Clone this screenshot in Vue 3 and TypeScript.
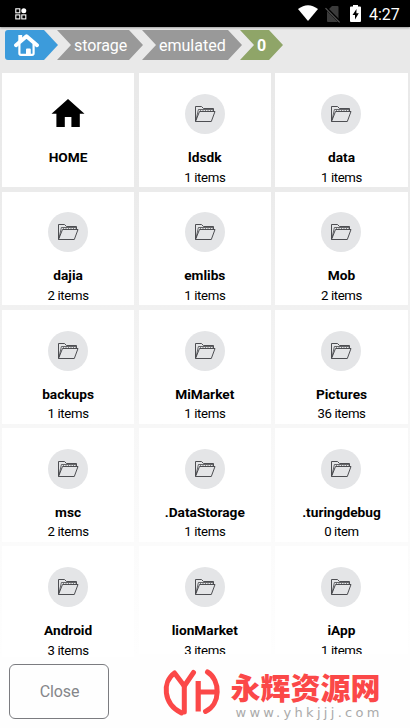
<script setup lang="ts">
interface Entry {
  name: string
  count: string
}

const entries: Entry[] = [
  { name: 'HOME', count: '' },
  { name: 'ldsdk', count: '1 items' },
  { name: 'data', count: '1 items' },
  { name: 'dajia', count: '2 items' },
  { name: 'emlibs', count: '1 items' },
  { name: 'Mob', count: '2 items' },
  { name: 'backups', count: '1 items' },
  { name: 'MiMarket', count: '1 items' },
  { name: 'Pictures', count: '36 items' },
  { name: 'msc', count: '2 items' },
  { name: '.DataStorage', count: '1 items' },
  { name: '.turingdebug', count: '0 item' },
  { name: 'Android', count: '3 items' },
  { name: 'lionMarket', count: '3 items' },
  { name: 'iApp', count: '1 items' },
]
</script>

<template>
  <div class="screen">
    <header class="status">
      <svg class="apps" width="12" height="12" viewBox="0 0 12 12" fill="none" stroke="#fff" stroke-width="1.1">
        <rect x=".8" y=".8" width="4" height="4" />
        <rect x=".8" y="6.9" width="4" height="4" />
        <rect x="6.8" y="6.9" width="4" height="4" />
        <circle cx="8.8" cy="2.7" r="2.5" fill="#fff" stroke="none" />
      </svg>
      <div class="indicators">
        <svg width="20" height="16" viewBox="0 0 20 16"><path d="M0 4Q10-3.6 20 4L10 16Z" fill="#fff" /></svg>
        <svg class="sim" width="16" height="17" viewBox="0 0 16 17">
          <path d="M7 0H12.5Q13.5 0 13.5 1V16H3Q2 16 2 15V5Z" fill="#3b3b3b" />
          <path d="M.5 1.5L15 16" stroke="#000" stroke-width="3" />
          <path d="M.5 2.2L14.6 16.3" stroke="#555" stroke-width="1.2" />
        </svg>
        <svg class="battery" width="11" height="17" viewBox="0 0 11 17">
          <path d="M3 0H8V1.5H10Q11 1.5 11 2.5V16Q11 17 10 17H1Q0 17 0 16V2.5Q0 1.5 1 1.5H3Z" fill="#fff" />
          <path d="M6.5 4L2.5 10H5V14.5L8.8 8.3H6.4Z" fill="#000" />
        </svg>
        <time>4:27</time>
      </div>
    </header>

    <nav class="crumbs">
      <a class="crumb root">
        <svg width="25" height="24" viewBox="0 0 25 24">
          <path d="M5.4 11V20.2Q5.4 21.8 7 21.8H18Q19.6 21.8 19.6 20.2V11" fill="none" stroke="#fff" stroke-width="2.2" />
          <path d="M2 12.3L12.5 3.2L23 12.3" fill="none" stroke="#fff" stroke-width="3.8" stroke-linecap="round" stroke-linejoin="round" />
          <path d="M4.3 2H8.2V6L4.3 9.3ZM12 21.5V16.5Q12 15.5 13 15.5H15.8Q16.8 15.5 16.8 16.5V21.5Z" fill="#fff" />
        </svg>
      </a>
      <a class="crumb storage">storage</a>
      <a class="crumb emulated">emulated</a>
      <a class="crumb current">0</a>
    </nav>

    <main class="grid">
      <article v-for="entry in entries" :key="entry.name" class="card">
        <svg v-if="entry.name === 'HOME'" class="icon" width="40" height="40" viewBox="0 0 40 40">
          <path d="M20 5L36.5 19.8H31.8V33H23.4V23H16.8V33H8.4V19.8H3.5Z" fill="#000" />
        </svg>
        <svg v-else class="icon" width="40" height="40" viewBox="0 0 40 40">
          <circle cx="20" cy="20" r="20" fill="#e4e5e7" />
          <g fill="none" stroke="#45464a" stroke-width=".95">
            <path d="M10.5 27.5V12.5H16.5L18.5 14.5H28.5V17.2" />
            <path d="M11 26L13.4 15.5H28" stroke-width=".8" />
            <path d="M10.5 27.5L14.5 17.5H30L26.3 27.5Z" />
            <path d="M15 16.7H28" stroke-dasharray="1 1.5" stroke-width=".8" />
          </g>
        </svg>
        <h2>{{ entry.name }}</h2>
        <p>{{ entry.count }}</p>
      </article>
    </main>

    <footer class="footer">
      <button class="close" type="button">Close</button>
      <div class="brand">
        <svg class="mark" width="57" height="54" viewBox="0 0 57 54" fill="none" stroke="#fb4848" stroke-width="5" stroke-linecap="round" stroke-linejoin="round">
          <path d="M18.5 49C0 40-1 18 11.5 9L21.3 22V48" />
          <path d="M30.5 8.5L21.3 22" />
          <path d="M44.5 8C57.5 16 58 40 42.5 47.5" />
          <path d="M35.2 17V47.5M35.2 28H53" stroke-width="5.2" stroke-linecap="butt" />
        </svg>
        <div class="words">
          <strong>永辉资源网</strong>
          <span>www.yhkjjj.com</span>
        </div>
      </div>
    </footer>
  </div>
</template>

<style>
body {
  margin: 0;
}
</style>

<style scoped>
.screen {
  display: flex;
  flex-direction: column;
  width: 410px;
  height: 728px;
  overflow: hidden;
  font-family: Roboto, "Noto Sans CJK SC", sans-serif;
  background: linear-gradient(#e9e9e9 0, #e9e9e9 90px, #ebebeb 190px, #f1f1f1 308px, #f7f7f7 426px, #fbfbfb 545px, #fefefe 654px, #fefefe 100%);
}

.status {
  display: flex;
  flex: none;
  align-items: flex-start;
  justify-content: space-between;
  box-sizing: border-box;
  height: 27px;
  padding: 5px 9px 0 15px;
  color: #fff;
  background: #000;
  box-shadow: 0 1px 2px #0005;
}

.apps {
  margin-top: 3px;
}

.indicators {
  display: flex;
  align-items: flex-start;
  margin-right: 1px;
}

.sim {
  margin: 1px 0 0 7px;
}

.battery {
  margin-left: 9px;
}

time {
  width: 31px;
  margin-left: 8px;
  font-size: 16px;
  line-height: 19px;
}

.crumbs {
  display: flex;
  flex: none;
  height: 30px;
  padding: 3px 0 13.3px 5px;
}

.crumb {
  box-sizing: border-box;
  height: 30px;
  padding-left: 17px;
  font-size: 16px;
  line-height: 31px;
  color: #fff;
  background: #999;
  clip-path: polygon(0 0, calc(100% - 14px) 0, 100% 50%, calc(100% - 14px) 100%, 0 100%, 14px 50%);
}

.root {
  width: 53px;
  padding: 3px 0 0 9px;
  line-height: 0;
  background: #3c9bdb;
  border-radius: 3px;
  clip-path: polygon(0 0, 39px 0, 100% 50%, 39px 100%, 0 100%);
}

.storage {
  width: 86px;
  margin-left: -1px;
  letter-spacing: -0.1px;
}

.emulated {
  width: 100px;
  margin-left: -1px;
}

.current {
  width: 43px;
  margin-left: -2px;
  font-weight: 700;
  background: #8fa568;
}

.grid {
  display: grid;
  flex: none;
  grid-template-columns: repeat(3, 132.2px);
  grid-auto-rows: 113.8px;
  gap: 4.5px;
  height: 583.7px;
  padding: 0 2px;
  overflow: hidden;
}

.card {
  display: flex;
  flex-direction: column;
  align-items: center;
  padding-top: 20.7px;
  box-sizing: border-box;
  color: #000;
  background: #fff;
}

.icon {
  display: block;
  flex: none;
}

h2,
p {
  margin: 0;
  line-height: 20px;
}

h2 {
  margin-top: 13px;
  font-size: 13.7px;
  font-weight: 700;
}

p {
  margin-top: 0.6px;
  font-size: 13.2px;
  letter-spacing: -0.35px;
}

.footer {
  display: flex;
  flex: 1;
  align-items: flex-start;
  justify-content: space-between;
  padding: 0 0 0 9px;
}

.close {
  box-sizing: border-box;
  width: 100px;
  height: 55px;
  margin-top: 7px;
  padding: 1px 0 0 1px;
  font: 16px Roboto, sans-serif;
  letter-spacing: -0.1px;
  color: #85868a;
  background: #fefefe;
  border: 1px solid #7b7c80;
  border-radius: 6px;
}

.brand {
  display: flex;
  box-sizing: border-box;
  width: 274px;
  height: 74px;
  margin-top: -3.3px;
  padding: 11.3px 0 0 27px;
  background: #fefefe;
}

.mark {
  flex: none;
  margin-top: -1px;
}

.words {
  display: flex;
  flex-direction: column;
  margin-left: 10.5px;
  white-space: nowrap;
}

.words strong {
  margin-top: 5px;
  font-family: "Noto Sans CJK SC", sans-serif;
  font-size: 30px;
  font-weight: 900;
  line-height: 32px;
  color: #fb4848;
}

.words span {
  margin: 3px 0 0 5px;
  font-family: "DejaVu Sans", sans-serif;
  font-size: 13px;
  line-height: 16px;
  letter-spacing: 3.3px;
  color: #aaa;
}
</style>
